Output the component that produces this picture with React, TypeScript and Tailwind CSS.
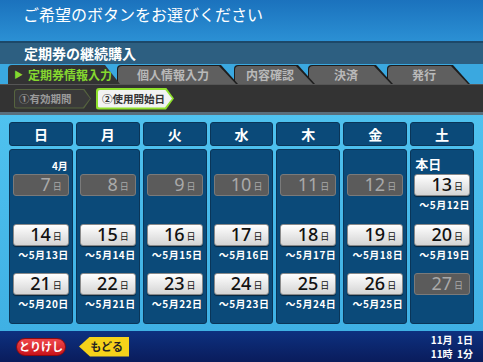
import React from 'react';

type Day = { d: number; sub?: string; off?: boolean };

const jp = '[font-family:"Noto_Sans_CJK_JP","Noto_Sans",sans-serif]';

const weeks: Day[][] = [
  [
    { d: 7, off: true },
    { d: 8, off: true },
    { d: 9, off: true },
    { d: 10, off: true },
    { d: 11, off: true },
    { d: 12, off: true },
    { d: 13, sub: '〜5月12日' },
  ],
  [
    { d: 14, sub: '〜5月13日' },
    { d: 15, sub: '〜5月14日' },
    { d: 16, sub: '〜5月15日' },
    { d: 17, sub: '〜5月16日' },
    { d: 18, sub: '〜5月17日' },
    { d: 19, sub: '〜5月18日' },
    { d: 20, sub: '〜5月19日' },
  ],
  [
    { d: 21, sub: '〜5月20日' },
    { d: 22, sub: '〜5月21日' },
    { d: 23, sub: '〜5月22日' },
    { d: 24, sub: '〜5月23日' },
    { d: 25, sub: '〜5月24日' },
    { d: 26, sub: '〜5月25日' },
    { d: 27, off: true },
  ],
];

const heads = ['日', '月', '火', '水', '木', '金', '土'];

const tabs = [
  { label: '個人情報入力', w: 'w-[121px]', ml: '-ml-[3px]', z: 'z-[4]' },
  { label: '内容確認', w: 'w-[81px]', ml: '-ml-[4px]', z: 'z-[3]' },
  { label: '決済', w: 'w-[85px]', ml: '-ml-[7px]', z: 'z-[2]' },
  { label: '発行', w: 'w-[83px]', ml: '-ml-[6px]', z: 'z-[1]' },
];

const DateButton: React.FC<{ day: Day }> = ({ day }) => (
  <div
    className={
      day.off
        ? 'h-[22px] mx-[3px] rounded-[3px] border border-[#7a7a7a] bg-[#5b5b5b] flex items-end justify-end pr-[6px] pb-[1px] text-[#a9a9a9]'
        : 'h-[22px] mx-[3px] rounded-[3px] border border-[#8a8a8a] bg-gradient-to-b from-[#ffffff] to-[#d4d4d4] flex items-end justify-end pr-[6px] pb-[1px] text-[#111] shadow-[0_1px_1px_rgba(0,0,0,0.5)]'
    }
  >
    <span className={'text-[18px] leading-[20px] [font-family:"Noto_Sans",sans-serif] ' + (day.off ? 'font-normal' : 'font-medium')}>
      {day.d}
    </span>
    <span className={'text-[9px] leading-[14px] ml-[2px] ' + jp}>日</span>
  </div>
);

const App: React.FC = () => {
  return (
    <div className={'w-[483px] h-[362px] overflow-hidden flex flex-col bg-[#4bbdeb] ' + jp}>
      {/* header */}
      <div className="h-[41px] bg-gradient-to-b from-[#1b72bd] to-[#2b90d4] px-[23px] pt-[3px] text-white text-[16px] leading-[22px]">
        ご希望のボタンをお選びください
      </div>

      {/* title band */}
      <div className="h-[23px] bg-[#2d5f81] border-t-2 border-[#1c4869] px-[24px] text-white text-[14px] font-bold leading-[20px]">
        定期券の継続購入
      </div>

      {/* tabs */}
      <div className="h-[20px] bg-[#3aa8e0] flex items-end pl-[8px]">
        <div className="relative z-[5] h-[19px] w-[112px] bg-[#333333] rounded-tl-[4px] [clip-path:polygon(0_0,97px_0,100%_100%,0_100%)] flex items-center pl-[6px] text-[#85d82f] text-[12px] font-bold">
          <span className="text-[9px] mr-[5px]">▶</span>定期券情報入力
        </div>
        {tabs.map((t) => (
          <div
            key={t.label}
            className={`relative ${t.z} ${t.ml} ${t.w} h-[19px] bg-[#1d1d1d] rounded-tl-[4px] [clip-path:polygon(0_0,calc(100%-17px)_0,100%_100%,0_100%)]`}
          >
            <div className="absolute inset-0 top-[1px] left-[1px] right-[2px] bg-[#5f5f5f] rounded-tl-[4px] [clip-path:polygon(0_0,calc(100%-17px)_0,100%_100%,0_100%)] flex items-center justify-center pr-[8px] text-[#b9b9b9] text-[12px] font-bold">
              {t.label}
            </div>
          </div>
        ))}
      </div>

      {/* steps */}
      <div className="h-[28px] bg-[#333333] border-t border-[#555] flex items-center pl-[14px] gap-[5px]">
        <div className="h-[20px] w-[77px] bg-[#56643f] rounded-l-[3px] [clip-path:polygon(0_0,70px_0,100%_50%,70px_100%,0_100%)] p-[1px]">
          <div className="h-full w-full bg-[#3a3a3a] rounded-l-[2px] [clip-path:polygon(0_0,68px_0,100%_50%,68px_100%,0_100%)] flex items-center pl-[4px] text-[#9a9a9a] text-[10.5px] font-bold">
            ①有効期間
          </div>
        </div>
        <div className="h-[22px] w-[78px] bg-[#8fe02c] rounded-l-[3px] [clip-path:polygon(0_0,70px_0,100%_50%,70px_100%,0_100%)] p-[2px]">
          <div className="h-full w-full bg-[#f2f2f2] rounded-l-[2px] [clip-path:polygon(0_0,67px_0,100%_50%,67px_100%,0_100%)] flex items-center pl-[4px] text-[#333] text-[10.5px] font-bold">
            ②使用開始日
          </div>
        </div>
      </div>
      <div className="h-[3px] bg-[#5a6f7c]" />

      {/* calendar */}
      <div className="flex-1 px-[9px] pt-[7px] pb-[5px] bg-gradient-to-b from-[#4fc2ef] to-[#3fb0e4]">
        <div className="grid grid-cols-7 gap-x-[3px]">
          {heads.map((h) => (
            <div
              key={h}
              className="h-[24px] rounded-[3px] bg-[#0b4a79] border border-[#0a3558] flex items-center justify-center text-white text-[14px] font-bold"
            >
              {h}
            </div>
          ))}
        </div>
        <div className="grid grid-cols-7 gap-x-[3px] mt-[3px]">
          {heads.map((h, ci) => (
            <div key={h} className="h-[175px] rounded-[3px] bg-[#0b4a79] border border-[#0a3558] flex flex-col">
              <div className="h-[25px] flex items-end px-[4px] pb-[2px] text-white font-bold">
                {ci === 0 && <span className="ml-auto text-[10px] leading-[12px]">4月</span>}
                {ci === 6 && <span className="text-[13px] leading-[16px]">本日</span>}
              </div>
              {weeks.map((w, ri) => (
                <div key={ri} className="h-[51px]">
                  <DateButton day={w[ci]} />
                  {w[ci].sub && (
                    <div className="mt-[3px] pr-[3px] text-right text-white text-[10px] leading-[12px] font-bold tracking-[0.5px]">
                      {w[ci].sub}
                    </div>
                  )}
                </div>
              ))}
            </div>
          ))}
        </div>
      </div>

      {/* bottom bar */}
      <div className="h-[31px] bg-gradient-to-b from-[#0d3180] to-[#0a1c5c] flex items-center pl-[16px] pr-[10px]">
        <div className="h-[18px] w-[50px] rounded-full bg-gradient-to-b from-[#f0464a] to-[#c8101a] border border-[#8a0a10] flex items-center justify-center text-white text-[11px] font-bold">
          とりけし
        </div>
        <div className="ml-[13px] h-[20px] w-[50px] bg-[#f5d21a] [clip-path:polygon(0_50%,11px_0,100%_0,100%_100%,11px_100%)] flex items-center justify-end pr-[6px] text-[#222] text-[11px] font-bold">
          もどる
        </div>
        <div className="ml-auto flex flex-col gap-[1px] text-white text-[10px] leading-[13px] font-bold text-right">
          <div>11月&nbsp;&nbsp;1日</div>
          <div>11時&nbsp;&nbsp;1分</div>
        </div>
      </div>
    </div>
  );
};

export default App;
